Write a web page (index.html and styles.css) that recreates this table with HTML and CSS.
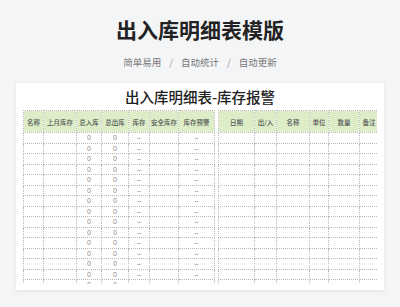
FILE: index.html
```html
<!DOCTYPE html>
<html lang="zh">
<head>
<meta charset="utf-8">
<link rel="stylesheet" href="styles.css">
</head>
<body>
<header class="top">
  <h1 class="title">出入库明细表模版</h1>
  <p class="tags"><span>简单易用</span><i>/</i><span>自动统计</span><i>/</i><span>自动更新</span></p>
</header>
<section class="card">
  <div class="sheet-title">出入库明细表-库存报警</div>
  <div class="tables">
    <table class="grid left">
      <colgroup><col style="width:20px"><col style="width:33px"><col style="width:25px"><col style="width:27px"><col style="width:21px"><col style="width:29px"><col style="width:36px"></colgroup>
      <thead><tr><th>名称</th><th>上月库存</th><th>总入库</th><th>总出库</th><th>库存</th><th>安全库存</th><th>库存预警</th></tr></thead>
      <tbody id="lb"></tbody>
    </table>
    <table class="grid right">
      <colgroup><col style="width:36px"><col style="width:22px"><col style="width:33px"><col style="width:19px"><col style="width:31px"><col style="width:19px"></colgroup>
      <thead><tr><th>日期</th><th>出/入</th><th>名称</th><th>单位</th><th>数量</th><th>备注</th></tr></thead>
      <tbody id="rb"></tbody>
    </table>
  </div>
</section>
<script>
var lb = document.getElementById('lb'), rb = document.getElementById('rb'), l = '', r = '';
for (var i = 0; i < 16; i++) {
  l += '<tr><td></td><td></td><td>0</td><td>0</td><td>–</td><td></td><td>–</td></tr>';
  r += '<tr><td></td><td></td><td></td><td></td><td></td><td></td></tr>';
}
lb.innerHTML = l; rb.innerHTML = r;
</script>
</body>
</html>
```
FILE: styles.css
```css
* { box-sizing: border-box; }
html, body { margin: 0; padding: 0; }
body {
  width: 400px;
  height: 307px;
  overflow: hidden;
  background: #f4f5f7;
  font-family: "Noto Sans CJK SC", "Noto Sans", sans-serif;
}
.top { padding-top: 17px; text-align: center; }
.title {
  margin: 0;
  font-size: 21px;
  line-height: 24px;
  font-weight: 700;
  color: #222;
}
.tags {
  margin: 14px 0 0;
  font-size: 9.5px;
  line-height: 14px;
  color: #777;
  display: flex;
  justify-content: center;
  gap: 8px;
}
.tags i { font-style: normal; color: #999; }
.card {
  margin: 14px 16px 0;
  height: 207px;
  background: #fff;
  box-shadow: 0 1px 4px rgba(0,0,0,0.08);
  padding: 0 7px 6px;
  display: flex;
  flex-direction: column;
}
.sheet-title {
  height: 27px;
  line-height: 27px;
  text-align: center;
  font-size: 14.5px;
  font-weight: 500;
  color: #222;
}
.tables {
  height: 174px;
  overflow: hidden;
  display: flex;
  gap: 3px;
  align-items: flex-start;
}
.grid {
  border-collapse: collapse;
  table-layout: fixed;
  font-size: 6.5px;
  color: #666;
}
.grid.left { width: 191px; }
.grid.right { width: 160px; }
.grid th, .grid td {
  border: 1px dotted #b8b8b8;
  padding: 0;
  text-align: center;
  white-space: nowrap;
  overflow: hidden;
}
.grid th {
  height: 22px;
  background: #dcedc8;
  font-weight: 500;
  color: #555;
}
.grid td {
  height: 10.5px;
  line-height: 9px;
  font-size: 7px;
  font-family: "Liberation Sans", sans-serif;
  color: #8a8a8a;
}
```
